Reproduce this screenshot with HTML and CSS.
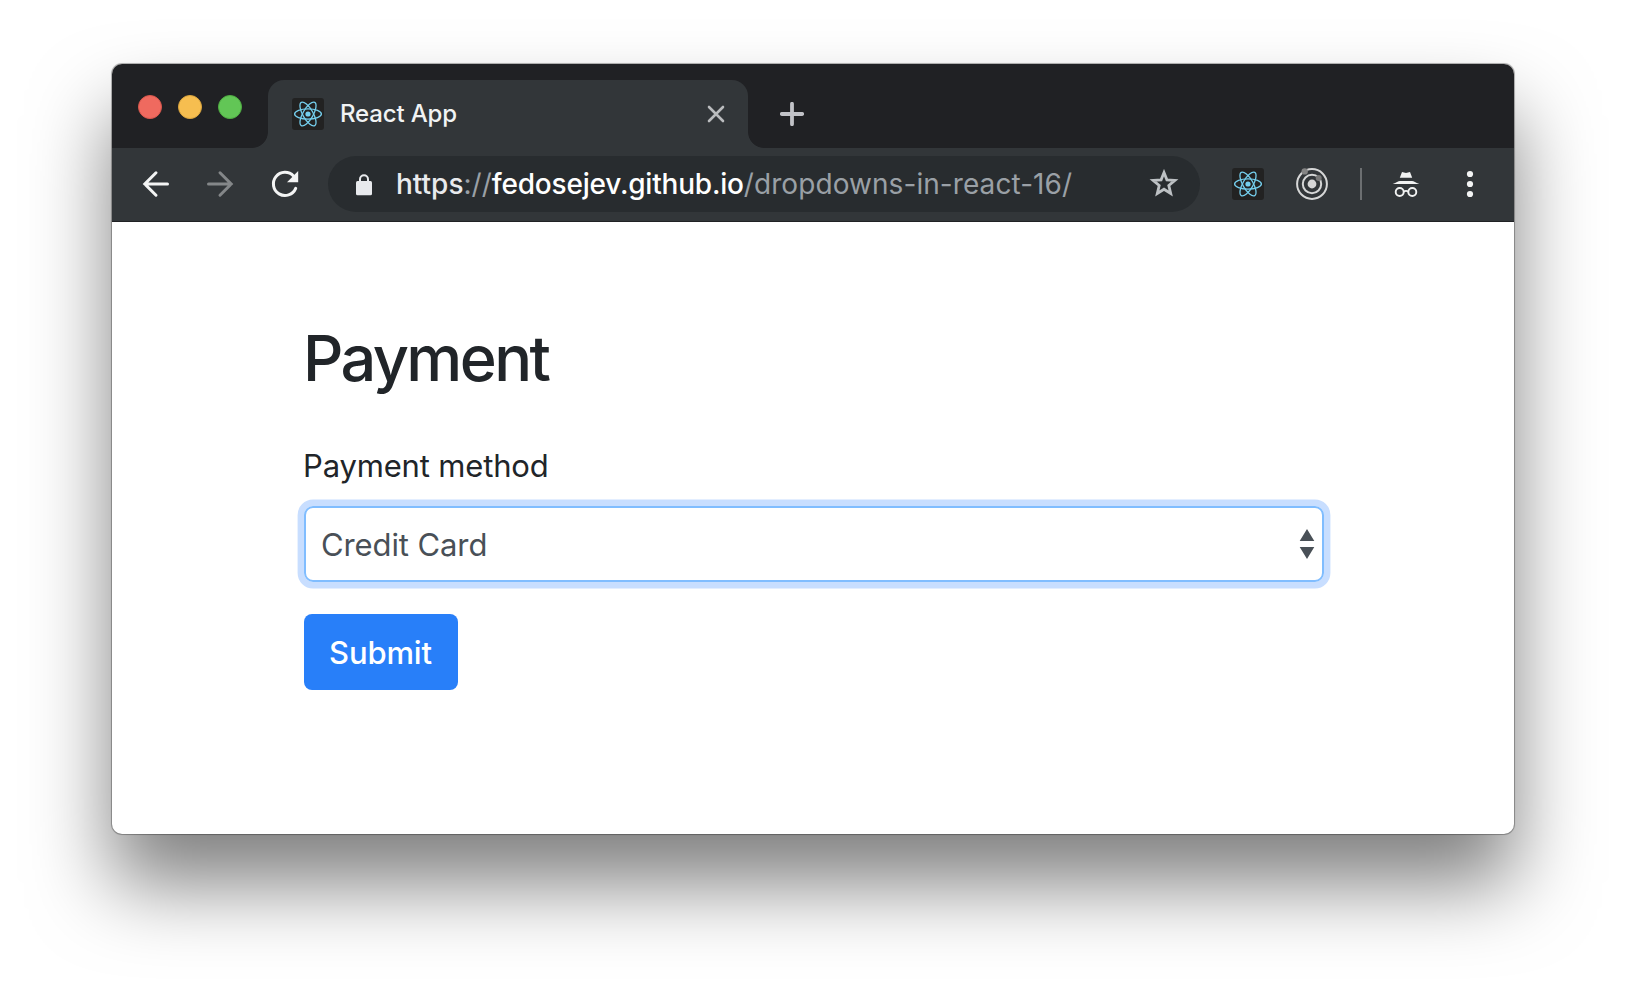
FILE: index.html
```html
<!DOCTYPE html>
<html lang="en">
<head>
<meta charset="utf-8">
<title>React App</title>
<link rel="stylesheet" href="styles.css">
</head>
<body>
<svg class="defs" width="0" height="0" aria-hidden="true">
  <symbol id="react" viewBox="0 0 32 32">
    <rect width="32" height="32" rx="3" fill="#222"/>
    <g fill="none" stroke="currentColor" stroke-width="1.3">
      <ellipse cx="16" cy="16" rx="13.4" ry="5.1"/>
      <ellipse cx="16" cy="16" rx="13.4" ry="5.1" transform="rotate(60 16 16)"/>
      <ellipse cx="16" cy="16" rx="13.4" ry="5.1" transform="rotate(120 16 16)"/>
    </g>
    <circle cx="16" cy="16" r="2.6" fill="currentColor"/>
  </symbol>
</svg>
<div class="window">
  <header class="tabstrip">
    <div class="lights">
      <span class="light red"></span><span class="light yellow"></span><span class="light green"></span>
    </div>
    <div class="tab">
      <svg class="favicon" width="32" height="32"><use href="#react"/></svg>
      <span class="tab-title">React App</span>
      <svg class="tab-close" width="18" height="18" viewBox="0 0 18 18"><path d="M2 2l14 14M16 2L2 16" stroke="#babcbe" stroke-width="2.6" stroke-linecap="round"/></svg>
    </div>
    <svg class="new-tab" width="24" height="24" viewBox="0 0 24 24"><path d="M12 1.8v20.4M1.8 12h20.4" stroke="#c1c2c7" stroke-width="3.8" stroke-linecap="round"/></svg>
  </header>
  <nav class="toolbar">
    <svg class="back" width="28" height="28" viewBox="0 0 28 28"><path d="M25.5 14H3M14 2.8L2.8 14 14 25.2" fill="none" stroke="#f3f4f4" stroke-width="3" stroke-linecap="round"/></svg>
    <svg class="forward" width="28" height="28" viewBox="0 0 28 28"><path d="M2.5 14H25M14 2.8L25.2 14 14 25.2" fill="none" stroke="#848789" stroke-width="3" stroke-linecap="round"/></svg>
    <svg class="reload" width="30" height="30" viewBox="0 0 30 30"><path d="M25.700 19.400A11.600 11.600 0 1 1 23.500 7" fill="none" stroke="#f3f4f4" stroke-width="3" stroke-linecap="round"/><path d="M28.200 2v11.200H17z" fill="#f3f4f4"/></svg>
    <div class="omnibox">
      <svg class="lock" width="18" height="22" viewBox="0 0 18 22"><rect x="1" y="7" width="16" height="14.200" rx="1.500" fill="#e8eaed"/><path d="M5 8V5.200a4 4 0 0 1 8 0V8" fill="none" stroke="#e8eaed" stroke-width="2"/></svg>
      <span class="url"><span class="scheme">https</span><span class="dim">://</span><span class="host">fedosejev.github.io</span><span class="dim path">/dropdowns-in-react-16/</span></span>
      <svg class="star" width="30" height="30" viewBox="0 0 30 30"><path d="M15 3.600l2.900 7.200 8 .6-6.100 5.100 1.900 7.900L15 20.200l-6.700 4.200 1.900-7.900-6.100-5.100 8-.6z" fill="none" stroke="#bdc1c4" stroke-width="2.800"/></svg>
    </div>
    <svg class="ext-react" width="32" height="32"><use href="#react"/></svg>
    <svg class="ext-rings" width="32" height="32" viewBox="0 0 32 32"><g fill="none" stroke="#d6d7d7"><circle cx="16" cy="16" r="14.900" stroke-width="2"/><circle cx="16" cy="16" r="9.200" stroke-width="2"/></g><circle cx="16" cy="16" r="4.400" fill="#d6d6d6"/><circle cx="8.700" cy="3.400" r="3.200" fill="#858585"/><circle cx="22.700" cy="10" r="3" fill="#777"/></svg>
    <span class="divider"></span>
    <svg class="incognito" width="28" height="28" viewBox="0 0 28 28"><path d="M10 2l4 1 4-1 2.200 5.700H7.800zM.7 14.100C4.500 12.700 6 10.900 8 10.900h12c2 0 3.500 1.800 7.300 3.200z" fill="#f1f2f2"/><g fill="none" stroke="#f1f2f2" stroke-width="1.900"><circle cx="7.700" cy="22" r="4"/><circle cx="20.300" cy="22" r="4"/><path d="M11.700 21.700q2.300-1.600 4.600 0"/></g></svg>
    <svg class="menu" width="8" height="28" viewBox="0 0 8 28"><g fill="#f3f4f4"><circle cx="4" cy="4" r="3.100"/><circle cx="4" cy="14" r="3.100"/><circle cx="4" cy="24" r="3.100"/></g></svg>
  </nav>
  <main class="page">
    <h1 class="heading">Payment</h1>
    <div class="label">Payment method</div>
    <div class="select">
      <span class="value">Credit Card</span>
      <svg class="arrows" width="16" height="30" viewBox="0 0 16 30"><path d="M8 0l7.300 12H.7zM.7 18h14.600L8 30z" fill="#495057"/></svg>
    </div>
    <button class="submit" type="button">Submit</button>
  </main>
</div>
</body>
</html>
```
FILE: styles.css
```css
* { box-sizing: border-box; }
body {
  margin: 0;
  height: 994px;
  padding: 64px 112px 0;
  background: #fff;
  font-family: Inter, "Liberation Sans", sans-serif;
  overflow: hidden;
}
svg { display: block; flex: none; }
.defs { display: none; }

.window {
  width: 1402px;
  height: 770px;
  border-radius: 10px;
  background: #fff;
  box-shadow: 0 0 0 1px rgba(0,0,0,.22), 0 0 2px rgba(0,0,0,.3), 0 50px 80px rgba(0,0,0,.5);
}

/* Tab strip */
.tabstrip {
  display: flex;
  height: 84px;
  background: #202124;
  border-radius: 10px 10px 0 0;
}
.lights { display: flex; flex: none; gap: 16px; padding: 31px 0 0 26px; width: 156px; }
.light { width: 24px; height: 24px; border-radius: 50%; border: 1px solid; }
.red { background: #ef6a5f; border-color: #d9574d; }
.yellow { background: #f6be50; border-color: #dba53d; }
.green { background: #62c656; border-color: #4fad42; }
.tab {
  position: relative;
  display: flex;
  align-items: center;
  width: 480px;
  height: 68px;
  margin-top: 16px;
  padding: 0 23px 0 24px;
  background: #323639;
  border-radius: 16px 16px 0 0;
}
.tab::before, .tab::after {
  content: "";
  position: absolute;
  bottom: 0;
  width: 16px;
  height: 16px;
}
.tab::before { left: -16px; background: radial-gradient(circle at 0 0, transparent 15.5px, #323639 16.3px); }
.tab::after { right: -16px; background: radial-gradient(circle at 100% 0, transparent 15.5px, #323639 16.3px); }
.favicon, .ext-react { color: #75cfee; }
.tab-title {
  flex: 1;
  margin: -1px 0 0 16px;
  color: #f1f3f4;
  font-size: 24px;
  font-weight: 500;
  line-height: 32px;
  letter-spacing: -.15px;
}
.new-tab { margin: 38px 0 0 32px; }

/* Toolbar */
.toolbar {
  display: flex;
  align-items: center;
  height: 74px;
  padding: 0 0 1px 30px;
  background: #323639;
  border-bottom: 1px solid #202124;
}
.forward { margin-left: 36px; }
.reload { margin-left: 36px; }
.omnibox {
  display: flex;
  align-items: center;
  width: 872px;
  height: 56px;
  margin-left: 28px;
  padding: 0 21px 0 27px;
  border-radius: 28px;
  background: #282c2f;
}
.lock { margin-top: 1px; }
.url {
  flex: 1;
  margin-left: 23px;
  font-size: 28px;
  line-height: 36px;
  white-space: nowrap;
}
.scheme { color: #e8eaed; font-weight: 500; }
.host { color: #fff; font-weight: 500; letter-spacing: -.2px; }
.dim { color: #9aa0a6; }
.path { letter-spacing: .07px; }
.ext-react { margin-left: 32px; }
.ext-rings { margin-left: 32px; }
.divider { width: 2px; height: 32px; margin-left: 32px; background: #6c6f71; }
.incognito { margin-left: 30px; }
.menu { margin-left: 46px; }

/* Page */
.page { padding: 98px 190px 0 192px; color: #212529; }
.heading {
  margin: 0 0 0 -1px;
  font-size: 63px;
  font-weight: 500;
  line-height: 77px;
  letter-spacing: -2.6px;
}
.label {
  margin: 45px 0 0 -1px;
  font-size: 31px;
  line-height: 48px;
  letter-spacing: -.16px;
}
.select {
  display: flex;
  align-items: center;
  justify-content: space-between;
  width: 1020px;
  height: 76px;
  margin-top: 16px;
  padding: 0 7px 0 15px;
  border: 2px solid #80bdff;
  border-radius: 9px;
  box-shadow: 0 0 0 6.4px #c8deff;
  color: #495057;
}
.value { font-size: 31px; letter-spacing: -.1px; }
.submit {
  display: flex;
  align-items: center;
  justify-content: center;
  width: 154px;
  height: 76px;
  margin-top: 32px;
  padding: 0 1px 0 0;
  border: 0;
  border-radius: 8px;
  background: #287ff9;
  color: #fff;
  font-family: inherit;
  font-size: 31px;
  font-weight: 500;
  letter-spacing: -.15px;
}
```
